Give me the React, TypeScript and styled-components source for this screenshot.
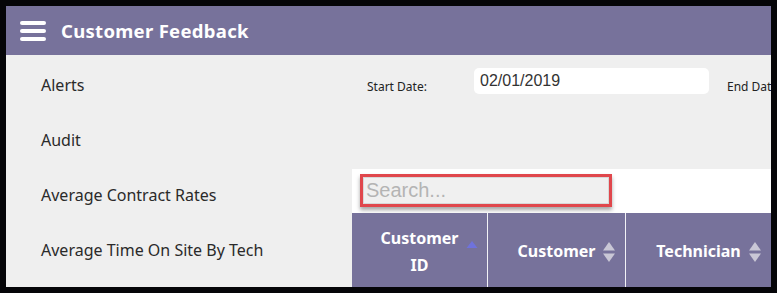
import styled, { createGlobalStyle } from 'styled-components'

const GlobalStyle = createGlobalStyle`
  html, body {
    margin: 0;
    padding: 0;
    background: #000;
  }
  * {
    box-sizing: border-box;
  }
`

const Frame = styled.div`
  width: 777px;
  height: 293px;
  border: 6px solid #050508;
  background: #efefef;
  display: flex;
  flex-direction: column;
  overflow: hidden;
  font-family: "Noto Sans", "Open Sans", sans-serif;
`

const Header = styled.header`
  height: 49px;
  flex-shrink: 0;
  background: #77729b;
  display: flex;
  align-items: center;
  padding-left: 14px;
  gap: 15px;
`

const Burger = styled.div`
  display: flex;
  flex-direction: column;
  gap: 4px;
  width: 26px;
  margin-top: 1px;
`

const BurgerBar = styled.span`
  display: block;
  height: 4px;
  border-radius: 2px;
  background: #fff;
`

const Title = styled.h1`
  margin: 0;
  color: #fff;
  font-size: 18.5px;
  font-weight: 700;
  letter-spacing: 0.3px;
`

const Main = styled.div`
  flex: 1;
  display: flex;
  min-height: 0;
`

const Sidebar = styled.nav`
  width: 346px;
  flex-shrink: 0;
  padding-top: 2px;
`

const NavItem = styled.div`
  height: 55px;
  display: flex;
  align-items: center;
  padding-left: 35px;
  font-size: 16px;
  color: #2a2a2a;
`

const Panel = styled.section`
  flex: 1;
  display: flex;
  flex-direction: column;
  min-width: 0;
  overflow: hidden;
`

const FilterRow = styled.div`
  height: 114px;
  flex-shrink: 0;
  display: flex;
  align-items: flex-start;
  padding: 13px 0 0 15px;
  white-space: nowrap;
`

const FilterLabel = styled.label<{ $width: number }>`
  width: ${p => p.$width}px;
  flex-shrink: 0;
  font-size: 12px;
  color: #222;
  padding-top: 10px;
`

const DateInput = styled.input`
  width: 235px;
  height: 26px;
  flex-shrink: 0;
  margin-right: 18px;
  border: none;
  border-radius: 5px;
  background: #fff;
  padding: 0 6px;
  font-family: "Liberation Sans", Arial, sans-serif;
  font-size: 16px;
  color: #333;
  outline: none;
`

const SearchBand = styled.div`
  height: 44px;
  flex-shrink: 0;
  background: #fff;
  padding: 5px 0 0 8px;
`

const SearchBox = styled.div`
  width: 252px;
  height: 33px;
  border: 3px solid #e0474c;
  box-shadow: 0 3px 4px rgba(0, 0, 0, 0.35);
  background: #efefef;
`

const SearchInput = styled.input`
  width: 100%;
  height: 100%;
  border: 1px solid #d8d8d8;
  background: #f0f0f0;
  padding: 0 2px;
  font-family: "Liberation Sans", Arial, sans-serif;
  font-size: 20px;
  color: #333;
  outline: none;
  &::placeholder {
    color: #b4b4b4;
  }
`

const TableHead = styled.div`
  flex: 1;
  display: grid;
  grid-template-columns: 136px 138px 1fr;
  background: #77729b;
`

// text stays centred in the cell; left padding balances the sort arrows
const HeadCell = styled.div<{ $last?: boolean }>`
  display: flex;
  align-items: center;
  justify-content: center;
  gap: 7px;
  border-right: ${p => (p.$last ? 'none' : '1px solid #f2f2f6')};
  padding: 3px 4px 0 25px;
  color: #fff;
  font-size: 16px;
  font-weight: 700;
  text-align: center;
  line-height: 27px;
`

const SortIcon = styled.svg<{ $top?: boolean }>`
  flex-shrink: 0;
  align-self: ${p => (p.$top ? 'flex-start' : 'center')};
  margin-top: ${p => (p.$top ? '20px' : '0')};
`

function Sort({ active }: { active?: boolean }) {
  return (
    <SortIcon $top={active} width="14" height="24" viewBox="0 0 14 24">
      {active ? (
        <polygon points="7,5 12.5,12 1.5,12" fill="#6f72dc" />
      ) : (
        <>
          <polygon points="7,2 13,10.5 1,10.5" fill="#c9c7d6" />
          <polygon points="1,13.5 13,13.5 7,22" fill="#c9c7d6" />
        </>
      )}
    </SortIcon>
  )
}

const navItems = ['Alerts', 'Audit', 'Average Contract Rates', 'Average Time On Site By Tech']

export default function App() {
  return (
    <>
      <GlobalStyle />
      <Frame>
        <Header>
          <Burger>
            <BurgerBar />
            <BurgerBar />
            <BurgerBar />
          </Burger>
          <Title>Customer Feedback</Title>
        </Header>
        <Main>
          <Sidebar>
            {navItems.map(item => (
              <NavItem key={item}>{item}</NavItem>
            ))}
          </Sidebar>
          <Panel>
            <FilterRow>
              <FilterLabel $width={107}>Start Date:</FilterLabel>
              <DateInput defaultValue="02/01/2019" />
              <FilterLabel $width={80}>End Date:</FilterLabel>
            </FilterRow>
            <SearchBand>
              <SearchBox>
                <SearchInput placeholder="Search..." />
              </SearchBox>
            </SearchBand>
            <TableHead>
              <HeadCell>
                <span>
                  Customer
                  <br />
                  ID
                </span>
                <Sort active />
              </HeadCell>
              <HeadCell>
                <span>Customer</span>
                <Sort />
              </HeadCell>
              <HeadCell $last>
                <span>Technician</span>
                <Sort />
              </HeadCell>
            </TableHead>
          </Panel>
        </Main>
      </Frame>
    </>
  )
}
